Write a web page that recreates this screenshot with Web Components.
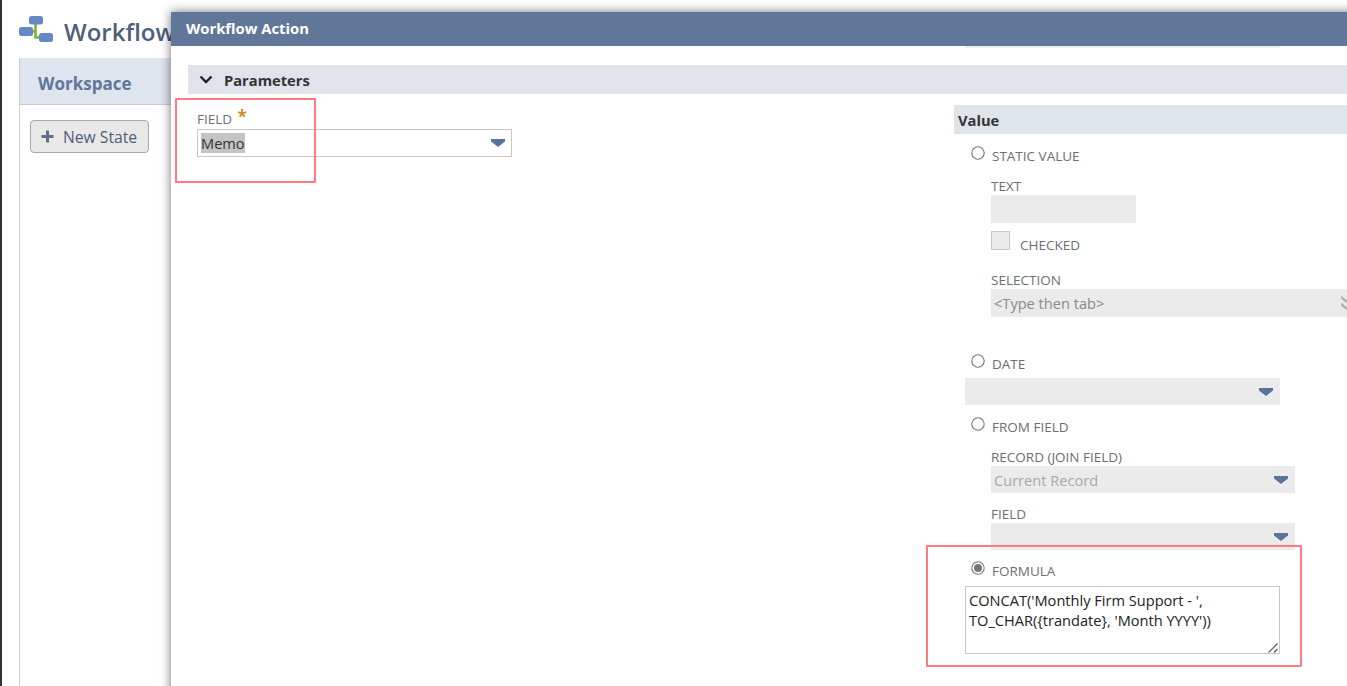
<!DOCTYPE html>
<html>
<head>
<meta charset="utf-8">
<title>Workflow Action</title>
<style>
  html, body { margin: 0; padding: 0; height: 100%; overflow: hidden; background: #fff; }
  body { font-family: "Open Sans", "Noto Sans", sans-serif; color: #4d5f79; }
</style>
</head>
<body>

<wf-page>
  <wf-dialog heading="Workflow Action">
    <wf-params></wf-params>
  </wf-dialog>
  <wf-mark style="left:175px;top:98px;width:137px;height:81px"></wf-mark>
  <wf-mark style="left:926px;top:545px;width:372px;height:118px"></wf-mark>
</wf-page>

<script>
(() => {
  const FONT = `"Open Sans", "Noto Sans", sans-serif`

  const ARROW = `<svg width="14" height="8" viewBox="0 0 14 8"><path d="M0 0H14V2.5L7 8L0 2.5Z" fill="#5a7499"/></svg>`
  const UPDOWN = `<svg width="6" height="14" viewBox="0 0 6 14"><path d="M0 1L6 6M0 8L6 13" fill="none" stroke="#b0b0b0" stroke-width="2.4"/></svg>`

  // page behind the dialog : title + workspace panel
  customElements.define("wf-page", class extends HTMLElement {
    constructor(){
      super()
      this.attachShadow({mode: 'open'}).innerHTML = `
        <style>
          :host { display: block; position: relative; width: 1347px; height: 686px; overflow: hidden; background: #fff; font-family: ${FONT}; }
          .page { height: 100%; box-sizing: border-box; border-left: 2px solid #333; padding: 15px 0 0 17px; }
          .title { display: flex; align-items: flex-start; gap: 10px; height: 33px; margin-bottom: 10px; }
          .title span { font-size: 24px; line-height: 33px; font-weight: 600; color: #4d5f79; white-space: nowrap; }
          .panel { border-left: 1px solid #c8ccd2; height: 100%; }
          .tab { height: 47px; box-sizing: border-box; background: #dfe5ee; border-bottom: 1px solid #c8ccd2; padding: 14px 0 0 18px; font-size: 17px; font-weight: 700; color: #607799; }
          .tools { padding: 15px 0 0 10px; }
          button { display: flex; align-items: center; gap: 9px; width: 119px; height: 33px; padding: 0 0 0 10px; box-sizing: border-box; background: #e8e8e8; border: 1px solid #a8a8a8; border-radius: 4px; font: 400 15.7px ${FONT}; color: #4d5f79; }
        </style>
        <div class="page">
          <div class="title">
            <svg width="35" height="27" viewBox="0 0 35 27">
              <path d="M16.5 9V22.5H22M10 16.5H16.5" fill="none" stroke="#7ab62e" stroke-width="2.6"/>
              <rect x="10" y="1" width="14" height="8.5" rx="2.5" fill="#6388c4"/>
              <rect x="0" y="12" width="14" height="9" rx="2.5" fill="#6388c4"/>
              <rect x="20" y="18" width="14" height="9" rx="2.5" fill="#6388c4"/>
            </svg>
            <span>Workflow</span>
          </div>
          <div class="panel">
            <div class="tab">Workspace</div>
            <div class="tools">
              <button><svg width="13" height="13" viewBox="0 0 13 13"><path d="M6.5 0.5V12.5M0.5 6.5H12.5" stroke="#5f6f85" stroke-width="3"/></svg>New State</button>
            </div>
          </div>
        </div>
        <slot></slot>`
    }
  })

  customElements.define("wf-dialog", class extends HTMLElement {
    constructor(){
      super()
      this.attachShadow({mode: 'open'}).innerHTML = `
        <style>
          :host { display: block; position: absolute; left: 171px; top: 12px; width: 1300px; height: 800px; background: #fff; box-shadow: 0 0 10px rgba(0,0,0,.55); }
          header { height: 34px; box-sizing: border-box; background: #607799; color: #fff; font-size: 14.8px; font-weight: 700; padding: 6px 0 0 15px; }
        </style>
        <header></header>
        <slot></slot>`
      this.shadowRoot.querySelector("header").textContent = this.getAttribute("heading")
    }
  })

  // red annotation rectangle drawn over the screenshot
  customElements.define("wf-mark", class extends HTMLElement {
    constructor(){
      super()
      this.attachShadow({mode: 'open'}).innerHTML = `
        <style>
          :host { display: block; position: absolute; border: 2px solid #ff7b7f; border-radius: 1px; box-sizing: content-box; pointer-events: none; }
        </style>`
    }
  })

  customElements.define("wf-label", class extends HTMLElement {
    constructor(){
      super()
      this.attachShadow({mode: 'open'}).innerHTML = `
        <style>
          :host { display: block; font-size: 13.5px; line-height: 18px; color: #6a6f76; white-space: nowrap; }
        </style>
        <slot></slot>`
    }
  })

  customElements.define("wf-radio", class extends HTMLElement {
    constructor(){
      super()
      const on = this.hasAttribute("checked")
      this.attachShadow({mode: 'open'}).innerHTML = `
        <style>
          :host { display: flex; align-items: flex-start; gap: 7px; margin-left: 6px; font-size: 13.5px; line-height: 18px; color: #6a6f76; white-space: nowrap; }
          svg { flex: none; }
          span { padding-top: 1px; }
        </style>
        <svg width="14" height="14" viewBox="0 0 14 14">
          <circle cx="7" cy="7" r="6.2" fill="#fff" stroke="#767676" stroke-width="1.1"/>
          ${on ? '<circle cx="7" cy="7" r="4" fill="#767676"/>' : ''}
        </svg>
        <span><slot></slot></span>`
    }
  })

  customElements.define("wf-select", class extends HTMLElement {
    constructor(){
      super()
      const icon = this.getAttribute("icon") == "updown" ? UPDOWN : ARROW
      this.attachShadow({mode: 'open'}).innerHTML = `
        <style>
          :host { display: flex; align-items: center; justify-content: space-between; box-sizing: border-box; height: 27px; padding: 0 7px 0 3px; background: #ebebeb; font-size: 14.6px; color: #a9a9a9; white-space: nowrap; }
          :host([open]) { height: 28px; background: #fff; border: 1px solid #c8c8c8; padding: 0 6px 0 3px; color: #333; }
          :host([icon=updown]) { height: 28px; padding-right: 0; color: #8a8a8a; }
          ::slotted(mark) { background: #c4c4c4; color: #333; }
        </style>
        <span><slot></slot></span>${icon}`
    }
  })

  // body of the dialog : parameters section, field on the left, value on the right
  customElements.define("wf-params", class extends HTMLElement {
    constructor(){
      super()
      this.attachShadow({mode: 'open'}).innerHTML = `
        <style>
          :host { display: block; padding: 0 0 0 17px; font-family: ${FONT}; }
          .stub { height: 2px; width: 315px; margin-left: 777px; background: #eee; }
          .bar { display: flex; align-items: center; gap: 11px; margin-top: 17px; height: 29px; padding-left: 11px; background: #dfe3ea; font-size: 14.7px; font-weight: 700; color: #333; }
          .cols { display: flex; }
          .left { width: 315px; margin: 15px 0 0 9px; }
          .left wf-label { line-height: 20px; }
          .star { color: #c8901e; font-size: 17px; font-weight: 700; margin-left: 2px; line-height: 16px; position: relative; top: -1px; }
          .right { margin: 11px 0 0 442px; width: 500px; }
          .head { height: 29px; line-height: 30px; padding-left: 4px; background: #dfe3ea; font-size: 14.7px; font-weight: 700; color: #333; }
          .body { padding-left: 11px; }
          .sub { margin-left: 26px; }
          .box { width: 145px; height: 28px; background: #ebebeb; }
          .check { display: flex; align-items: flex-start; gap: 10px; margin-top: 8px; font-size: 13.5px; line-height: 18px; color: #6a6f76; }
          .check i { display: block; width: 17px; height: 17px; background: #ebebeb; border: 1px solid #c8c8c8; }
          .check span { padding-top: 5px; }
          .formula { position: relative; width: 315px; margin-top: 6px; }
          .formula svg { position: absolute; right: 2px; bottom: 1px; }
          textarea { display: block; box-sizing: border-box; width: 315px; height: 68px; padding: 3px 3px; border: 1px solid #c8c8c8; border-radius: 0; font: 400 14.6px/20px ${FONT}; color: #222; outline: none; resize: none; overflow: hidden; }
        </style>
        <div class="stub"></div>
        <div class="bar">
          <svg width="14" height="9" viewBox="0 0 14 9"><path d="M1.5 1.5L7 7L12.5 1.5" fill="none" stroke="#222" stroke-width="2.4"/></svg>
          Parameters
        </div>
        <div class="cols">
          <div class="left">
            <wf-label>FIELD <span class="star">*</span></wf-label>
            <wf-select open><mark>Memo</mark></wf-select>
          </div>
          <div class="right">
            <div class="head">Value</div>
            <div class="body">
              <wf-radio style="margin-top:12px">STATIC VALUE</wf-radio>
              <div class="sub" style="margin-top:12px">
                <wf-label>TEXT</wf-label>
                <div class="box"></div>
                <div class="check"><i></i><span>CHECKED</span></div>
                <wf-label style="margin-top:17px">SELECTION</wf-label>
                <wf-select icon="updown" style="width:356px">&lt;Type then tab&gt;</wf-select>
              </div>
              <wf-radio style="margin-top:37px">DATE</wf-radio>
              <wf-select style="width:315px;margin-top:5px"></wf-select>
              <wf-radio style="margin-top:12px">FROM FIELD</wf-radio>
              <div class="sub" style="margin-top:12px">
                <wf-label>RECORD (JOIN FIELD)</wf-label>
                <wf-select style="width:304px">Current Record</wf-select>
                <wf-label style="margin-top:12px">FIELD</wf-label>
                <wf-select style="width:304px"></wf-select>
              </div>
              <wf-radio checked style="margin-top:11px">FORMULA</wf-radio>
              <div class="formula">
                <textarea spellcheck="false">CONCAT('Monthly Firm Support - ', TO_CHAR({trandate}, 'Month YYYY'))</textarea>
                <svg width="10" height="10" viewBox="0 0 10 10"><path d="M9.5 0.5L0.5 9.5M9.5 6L6 9.5" fill="none" stroke="#555" stroke-width="1.2"/></svg>
              </div>
            </div>
          </div>
        </div>`
    }
  })
})()
</script>
</body>
</html>
